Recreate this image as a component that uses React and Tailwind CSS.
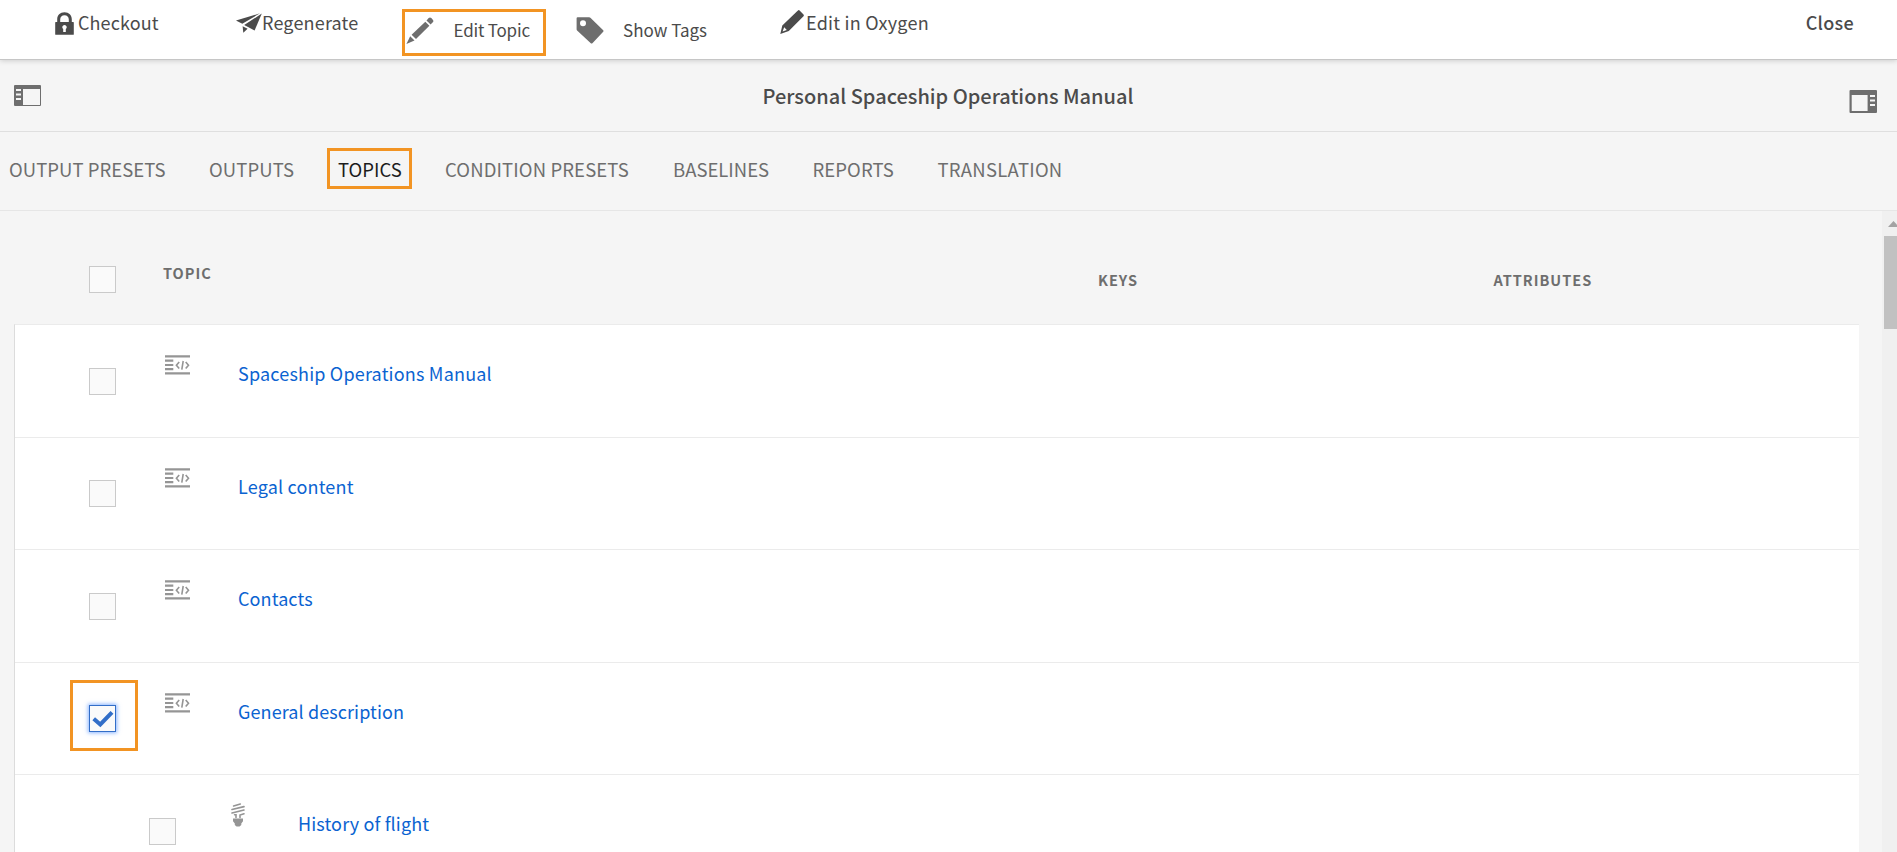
const LockIcon = () => (
  <svg className="mt-[12px] h-[23px] w-[19px] shrink-0" viewBox="0 0 19 23" fill="#4b4b4b">
    <path fillRule="evenodd" d="M2.2 10V7.4C2.2 3.2 5 .3 9.5 .3s7.3 2.9 7.3 7.1V10h1.4q.6 0 .6.6v11.6q0 .6-.6.6H.8q-.6 0-.6-.6V10.600q0-.6.6-.6zM5.200 10h8.600V7.500C13.800 4.800 12.200 3.200 9.500 3.200S5.200 4.800 5.200 7.500zM9.500 13a2.200 2.200 0 0 0-1.300 4v3h2.600v-3a2.200 2.200 0 0 0-1.300-4z" />
  </svg>
);

const PlaneIcon = () => (
  <svg className="mt-[13px] h-[20px] w-[26px] shrink-0" viewBox="0 0 26 20" fill="#4b4b4b">
    <path d="M0 7.600 24 .3 6.300 10.700z" />
    <path d="M25.800 .5 18.600 17.600 8.200 12.100z" />
    <path d="M6.600 13.200 11.600 15.800 7.300 19.800z" />
  </svg>
);

const EditIcon = () => (
  <svg className="h-[27px] w-[28px] shrink-0" viewBox="0 0 28 27" fill="#6e6e6e">
    <path d="M20.500 3.500 22.700 1.100q1.300-1.200 2.600 0l1.500 1.600q1.200 1.300 0 2.600L24.600 7.600z" />
    <path d="M19.300 4.700 23.400 8.800 10 22 5.600 17.700z" />
    <path d="M4.200 19.200 8.500 23.400 .4 27z" />
  </svg>
);

const TagIcon = () => (
  <svg className="mt-[17px] h-[27px] w-[28px] shrink-0" viewBox="0 0 28 27" fill="#6e6e6e">
    <path fillRule="evenodd" d="M.6 1.200Q.6.200 1.600.200H13.200q.7 0 1.200.5L27.200 13.200q.8.800 0 1.600L16.400 26.200q-.8.800-1.600 0L1.100 13.400q-.5-.5-.5-1.200zM7 3.200a3 3 0 1 0 0 6 3 3 0 0 0 0-6z" />
  </svg>
);

const PencilIcon = () => (
  <svg className="mt-[10px] h-[24px] w-[24px] shrink-0" viewBox="0 0 24 24" fill="#4b4b4b">
    <path fillRule="evenodd" d="M16.600 1.700 18 .4q.8-.6 1.600.1l3.900 4q.7.900 0 1.700L8.800 20.900.3 24 2.300 15.600zM4.200 17.300 2.600 21.600 6.800 20z" />
  </svg>
);

const LeftRailIcon = () => (
  <svg className="mt-[25px] h-[21px] w-[27px] shrink-0" viewBox="0 0 27 21" fill="#6e6e6e">
    <path fillRule="evenodd" d="M1 0H26q1 0 1 1V20q0 1-1 1H1q-1 0-1-1V1Q0 0 1 0zM9 4V20H26V4zM2 4v2H7V4zM2 8.500v2H7v-2zM2 13v2H7v-2z" />
  </svg>
);

const RightRailIcon = () => (
  <svg className="mt-[30px] h-[23px] w-[28px] shrink-0" viewBox="0 0 28 23" fill="#6e6e6e">
    <path fillRule="evenodd" d="M1.500 0H27q1 0 1 1V22q0 1-1 1H1.500q-1 0-1-1V1q0-1 1-1zM2.700 5V21H18.600V5zM21 5v2h5V5zM21 9.500v2h5v-2zM21 14v2h5v-2z" />
  </svg>
);

const MapIcon = () => (
  <svg className="mt-[30px] h-[20px] w-[25px] shrink-0" viewBox="0 0 25 20" fill="none" stroke="#959595">
    <path strokeWidth="2.200" d="M0 1.400H25M0 18.300H25M0 5.700H8.300M0 10H8.300M0 14.200H8.300" />
    <path strokeWidth="1.600" d="M14.200 7 11.400 10.300 14.200 13.600M20.700 7 23.500 10.300 20.700 13.600M18.200 6 16.800 14.600" />
  </svg>
);

const BulbIcon = () => (
  <svg className="mt-[28px] ml-[6px] mr-[5px] h-[24px] w-[14px] shrink-0" viewBox="0 0 14 24" fill="none" stroke="#959595">
    <path strokeWidth="1.600" strokeLinecap="round" d="M2.600 3 9.300 1M1 6.500 13 3.600M1 10 13 7M5 14.500V11.700H3.600M9 14.500V12L13 10.700" />
    <path fill="#959595" stroke="none" d="M2 15.600H12V18.200L10.300 20.600V22L8.500 23.600H5.600L3.800 22V20.600L2 18.200z" />
  </svg>
);

const Box = ({ className }) => (
  <span className={`block size-[27px] shrink-0 border border-[#cacaca] bg-[#fafafa] ${className}`} />
);

const CheckedBox = () => (
  <span className="relative mt-[42px] block size-[27px] shrink-0 border border-[#326ec8] bg-[#fafafa] shadow-[0_0_4px_1px_rgba(38,118,255,0.55)]">
    <svg className="size-[25px]" viewBox="0 0 25 25" fill="none" stroke="#326ec8" strokeWidth="4">
      <path d="M3.700 12.700 10.300 18.500 22 6.300" />
    </svg>
    <span className="absolute top-[-26px] left-[-20px] h-[71px] w-[68px] border-3 border-[#f29423]" />
  </span>
);

const tabs = [
  { label: "OUTPUT PRESETS", cell: "w-[200px] tracking-[0.050px]" },
  { label: "OUTPUTS", cell: "w-[129px] tracking-[0.100px]" },
  { label: "TOPICS", cell: "w-[107px] text-[#1c1c1c]", active: true },
  { label: "CONDITION PRESETS", cell: "w-[228px] tracking-[0.120px]" },
  { label: "BASELINES", cell: "w-[139.500px]" },
  { label: "REPORTS", cell: "w-[125px] tracking-[0.080px]" },
  { label: "TRANSLATION", cell: "tracking-[0.250px]" },
];

const rows = [
  { label: "Spaceship Operations Manual", height: "h-[113px]", box: "mt-[43px]", text: "tracking-[0.190px]" },
  { label: "Legal content", height: "h-[112px]", box: "mt-[42px]", text: "tracking-[0.180px]" },
  { label: "Contacts", height: "h-[113px]", box: "mt-[43px]", text: "tracking-[0.100px]" },
  { label: "General description", height: "h-[112px]", checked: true, text: "tracking-[0.100px]" },
  { label: "History of flight", height: "h-[113px]", box: "mt-[43px]", text: "tracking-[0.130px]", child: true },
];

export default function App() {
  return (
    <div className="flex h-[852px] w-[1897px] flex-col overflow-hidden bg-[#f5f5f5] font-['Noto_Sans_CJK_SC','Open_Sans',sans-serif] text-[18px] leading-6 whitespace-nowrap text-[#4b4b4b]">
      <header className="z-10 flex h-[60px] shrink-0 items-start border-b border-[#c6c6c6] bg-white pl-[55px] shadow-[0_1px_5px_rgba(0,0,0,0.16)]">
        <button className="flex w-[181px] items-start gap-[4px]">
          <LockIcon />
          <span className="mt-[10px] tracking-[0.100px]">Checkout</span>
        </button>
        <button className="flex w-[166px] items-start">
          <PlaneIcon />
          <span className="mt-[10px] tracking-[0.180px]">Regenerate</span>
        </button>
        <button className="mt-[9px] flex h-[47px] w-[144px] items-start border-3 border-[#f29423] pt-[5px] pl-px text-[17px] leading-[25px]">
          <EditIcon />
          <span className="ml-[19.500px] tracking-[-0.200px]">Edit Topic</span>
        </button>
        <button className="ml-[30px] flex w-[204px] items-start">
          <TagIcon />
          <span className="mt-[17px] ml-[19px] text-[17px] leading-[25px]">Show Tags</span>
        </button>
        <button className="flex items-start">
          <PencilIcon />
          <span className="mt-[10px] ml-[2px] tracking-[0.240px]">Edit in Oxygen</span>
        </button>
        <button className="mt-[10px] mr-[43px] ml-auto font-medium tracking-[0.300px]">Close</button>
      </header>

      <div className="flex h-[72px] shrink-0 items-start justify-between border-b border-[#dfdfdf] pr-[20px] pl-[14px]">
        <LeftRailIcon />
        <h1 className="mt-[23px] ml-[6px] text-[20px] leading-[25px] font-medium">Personal Spaceship Operations Manual</h1>
        <RightRailIcon />
      </div>

      <nav className="flex h-[79px] shrink-0 items-start border-b border-[#e6e6e6] pl-[9px] text-[18.500px] text-[#6e6e6e]">
        {tabs.map((t) => (
          <div key={t.label} className={`relative shrink-0 pt-[25px] ${t.cell}`}>
            {t.label}
            {t.active && <span className="absolute top-[16px] left-[-11px] h-[41px] w-[85px] border-3 border-[#f29423]" />}
          </div>
        ))}
      </nav>

      <div className="flex min-h-0 flex-1">
        <main className="flex w-[1882px] flex-col pr-[23px] pl-[14px]">
          <div className="flex h-[113px] shrink-0 items-start pl-[75px] text-[14.500px] leading-[25px] font-bold tracking-[1px] text-[#6e6e6e]">
            <Box className="mt-[55px]" />
            <span className="mt-[49px] ml-[47px] w-[935px]">TOPIC</span>
            <span className="mt-[56px] w-[395.500px]">KEYS</span>
            <span className="mt-[56px]">ATTRIBUTES</span>
          </div>
          <div className="border-t border-l border-t-[#ebebeb] border-l-[#dcdcdc] bg-white">
            {rows.map((r) => (
              <div
                key={r.label}
                className={`flex items-start border-b border-[#ebebeb] ${r.height} ${r.child ? "pl-[134px]" : "pl-[74px]"}`}
              >
                {r.checked ? <CheckedBox /> : <Box className={r.box} />}
                <span className="ml-[49px] flex w-[73px]">{r.child ? <BulbIcon /> : <MapIcon />}</span>
                <a className={`mt-[36px] text-[#0b63d1] ${r.text}`}>{r.label}</a>
              </div>
            ))}
          </div>
        </main>
        <div className="flex w-[15px] flex-col bg-[#f0f0f0] pl-[2px]">
          <svg className="mt-[10px] ml-[4px] h-[6px] w-[9px] shrink-0" viewBox="0 0 9 6" fill="#a3a3a3">
            <path d="M0 6 5.500 0 11 6z" />
          </svg>
          <div className="mt-[9px] h-[93px] shrink-0 bg-[#c1c1c1]" />
        </div>
      </div>
    </div>
  );
}
